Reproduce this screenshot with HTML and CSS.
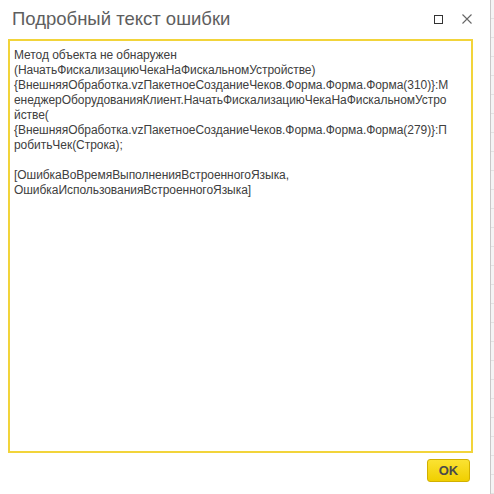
FILE: index.html
```html
<!DOCTYPE html>
<html lang="ru">
<head>
    <meta charset="UTF-8">
    <title>Подробный текст ошибки</title>
    <link rel="stylesheet" href="styles.css">
</head>
<body>
    <div class="screen">
        <div class="dialog">
            <div class="titlebar">
                <div class="title">Подробный текст ошибки</div>
                <div class="controls">
                    <svg class="btn-icon" width="12" height="12" viewBox="0 0 12 12">
                        <rect x="2.5" y="2.5" width="8" height="8" fill="none" stroke="#333" stroke-width="1"/>
                    </svg>
                    <svg class="btn-icon" width="12" height="12" viewBox="0 0 12 12">
                        <path d="M1.5 1.5 L10.5 10.5 M10.5 1.5 L1.5 10.5" stroke="#666" stroke-width="1.1" fill="none"/>
                    </svg>
                </div>
            </div>
            <div class="error-text">Метод объекта не обнаружен
(НачатьФискализациюЧекаНаФискальномУстройстве)
{ВнешняяОбработка.vzПакетноеСозданиеЧеков.Форма.Форма.Форма(310)}:М
енеджерОборудованияКлиент.НачатьФискализациюЧекаНаФискальномУстро
йстве(
{ВнешняяОбработка.vzПакетноеСозданиеЧеков.Форма.Форма.Форма(279)}:П
робитьЧек(Строка);

[ОшибкаВоВремяВыполненияВстроенногоЯзыка,
ОшибкаИспользованияВстроенногоЯзыка]</div>
            <div class="footer">
                <button class="ok-btn">OK</button>
            </div>
        </div>
        <div class="behind"></div>
    </div>
</body>
</html>
```

FILE: styles.css
```css
body {
    margin: 0;
    font-family: Arial, "Liberation Sans", sans-serif;
    background-color: #fff;
}

.screen {
    display: flex;
    height: 494px;
    overflow: hidden;
}

.dialog {
    width: 490px;
    display: flex;
    flex-direction: column;
    background-color: #fff;
    border-right: 1px solid #c8c8c8;
}

.titlebar {
    display: flex;
    align-items: center;
    justify-content: space-between;
    height: 38px;
    padding: 0 17px 0 12px;
}

.title {
    font-size: 18.5px;
    color: #5e5e5e;
}

.controls {
    display: flex;
    gap: 17px;
}

.error-text {
    height: 403px;
    margin: 1px 0 0 8px;
    width: 453px;
    border: 2px solid #f2d43a;
    padding: 7px 4px 0 4px;
    font-size: 12px;
    line-height: 15px;
    letter-spacing: -0.05px;
    color: #404040;
    white-space: pre;
    overflow: hidden;
}

.footer {
    display: flex;
    justify-content: flex-end;
    padding: 6px 20px 0 0;
}

.ok-btn {
    width: 43px;
    height: 23px;
    padding: 0;
    font-family: Arial, "Liberation Sans", sans-serif;
    font-size: 13px;
    font-weight: bold;
    color: #4a4a4a;
    background: linear-gradient(#fbe232, #f0cf00);
    border: 1px solid #d2b000;
    border-radius: 3px;
}

.behind {
    flex: 1;
    background-color: #f4f4f4;
    background-image: repeating-linear-gradient(#f4f4f4 0, #f4f4f4 18px, #e2e2e2 18px, #e2e2e2 19px);
}
```
